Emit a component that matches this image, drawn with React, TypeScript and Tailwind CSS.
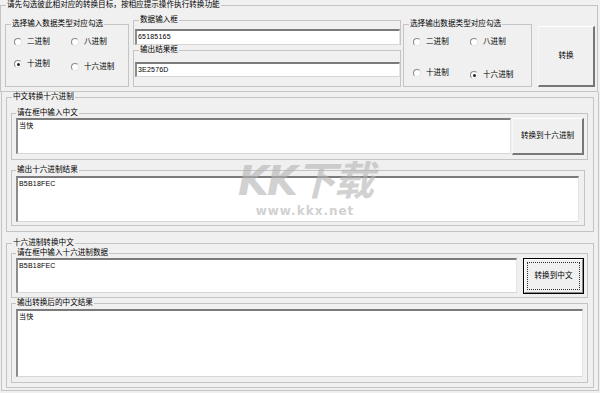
import type { ReactNode } from 'react';

const line = 'border border-[#c4c4c4]';

function Legend({ children, className = 'ml-[5px]' }: { children: ReactNode; className?: string }) {
  return <legend className={`${className} px-px leading-[10px]`}>{children}</legend>;
}

function Radio({ label, checked = false }: { label: string; checked?: boolean }) {
  return (
    <div className="flex h-[10px] w-[57px] items-center">
      <span className="flex h-[8px] w-[8px] items-center justify-center rounded-full border border-t-[#8a8a8a] border-l-[#8a8a8a] border-r-[#e6e6e6] border-b-[#e6e6e6] bg-white">
        {checked && <span className="h-[3px] w-[3px] rounded-full bg-[#222]" />}
      </span>
      <span className="ml-[5px] leading-[10px]">{label}</span>
    </div>
  );
}

function TextBox({ value, className }: { value?: string; className: string }) {
  return (
    <div
      className={`${className} border-t-2 border-l-2 border-r border-b border-t-[#7b7b7b] border-l-[#8c8c8c] border-r-[#e4e4e4] border-b-[#d6d6d6] bg-white px-[1px] pt-[1px] text-[7px] leading-[9px] tracking-[0.2px]`}
    >
      {value}
    </div>
  );
}

function Button({ label, className }: { label: string; className: string }) {
  return (
    <div
      className={`${className} flex items-center justify-center border-t border-l border-r-2 border-b-2 border-t-white border-l-[#f8f8f8] border-r-[#777] border-b-[#777] bg-[#f0f0f0]`}
    >
      {label}
    </div>
  );
}

export default function App() {
  return (
    <div className="relative h-[393px] w-[600px] overflow-hidden bg-[#f0f0f0] font-['Liberation_Sans','Noto_Sans_CJK_SC',sans-serif] text-[7.6px] text-black">
      {/* top settings row */}
      <fieldset className={`${line} h-[92px] w-[598px]`}>
        <Legend className="ml-[5px]">请先勾选彼此相对应的转换目标，按相应提示操作执行转换功能</Legend>
        <div className="flex items-start">
          <fieldset className={`${line} ml-[4px] mt-[9px] h-[68px] w-[124px]`}>
            <Legend>选择输入数据类型对应勾选</Legend>
            <div className="mt-[8px] flex pl-[8px]">
              <Radio label="二进制" />
              <Radio label="八进制" />
            </div>
            <div className="mt-[12px] flex pl-[8px]">
              <Radio label="十进制" checked />
              <div className="mt-[3px]">
                <Radio label="十六进制" />
              </div>
            </div>
          </fieldset>

          <div className="ml-[4px] mt-[5px] flex w-[268px] flex-col">
            <fieldset className={`${line} h-[30px] border-b-0 pl-px`}>
              <Legend className="ml-[4px]">数据输入框</Legend>
              <TextBox value="65185165" className="mt-[4px] h-[16px] w-[265px]" />
            </fieldset>
            <fieldset className={`${line} h-[42px] pl-px`}>
              <Legend className="ml-[4px]">输出结果框</Legend>
              <TextBox value="3E2576D" className="mt-[7px] h-[15px] w-[265px]" />
            </fieldset>
          </div>

          <fieldset className={`${line} ml-[2px] mt-[9px] h-[68px] w-[129px]`}>
            <Legend>选择输出数据类型对应勾选</Legend>
            <div className="mt-[8px] flex pl-[9px]">
              <Radio label="二进制" />
              <Radio label="八进制" />
            </div>
            <div className="mt-[21px] flex pl-[9px]">
              <Radio label="十进制" />
              <div className="mt-[2px]">
                <Radio label="十六进制" checked />
              </div>
            </div>
          </fieldset>

          <Button label="转换" className="ml-[6px] mt-[16px] h-[61px] w-[57px]" />
        </div>
      </fieldset>

      {/* conversion panels */}
      <div className={`${line} ml-px h-[299px] w-[598px] border-t-0`}>
        <fieldset className={`${line} ml-[4px] h-[140px] w-[588px]`}>
          <Legend>中文转换十六进制</Legend>
          <fieldset className={`${line} ml-[4px] mt-[6px] h-[52px] w-[577px]`}>
            <Legend className="ml-[4px]">请在框中输入中文</Legend>
            <div className="flex items-start">
              <TextBox value="当快" className="ml-[4px] h-[36px] w-[495px] text-[7.6px] leading-[10px]" />
              <Button label="转换到十六进制" className="ml-[1px] h-[37px] w-[72px]" />
            </div>
          </fieldset>
          <fieldset className={`${line} ml-[4px] mt-[5px] h-[61px] w-[574px]`}>
            <Legend className="ml-[4px]">输出十六进制结果</Legend>
            <TextBox value="B5B18FEC" className="ml-[4px] mt-[1px] h-[46px] w-[563px]" />
          </fieldset>
        </fieldset>

        <fieldset className={`${line} ml-[4px] mt-[6px] h-[150px] w-[588px]`}>
          <Legend>十六进制转换中文</Legend>
          <fieldset className={`${line} ml-[4px] h-[50px] w-[577px]`}>
            <Legend className="ml-[4px]">请在框中输入十六进制数据</Legend>
            <div className="flex items-start">
              <TextBox value="B5B18FEC" className="ml-[4px] h-[35px] w-[501px]" />
              <div className="ml-[6px] h-[36px] w-[61px] border border-black">
                <div className="flex h-full w-full items-center justify-center border-t border-l border-r border-b border-t-white border-l-white border-r-[#8a8a8a] border-b-[#8a8a8a] p-[2px]">
                  <div className="flex h-full w-full items-center justify-center border border-dotted border-[#333]">
                    转换到中文
                  </div>
                </div>
              </div>
            </div>
          </fieldset>
          <fieldset className={`${line} ml-[4px] h-[85px] w-[577px]`}>
            <Legend className="ml-[4px]">输出转换后的中文结果</Legend>
            <TextBox value="当快" className="ml-[4px] mt-[1px] h-[68px] w-[567px] text-[7.6px] leading-[10px]" />
          </fieldset>
        </fieldset>
      </div>

      {/* site watermark */}
      <div className="pointer-events-none absolute left-[238px] top-[158px] flex flex-col items-center opacity-60">
        <div className="font-['DejaVu_Sans','Noto_Sans_CJK_SC',sans-serif] text-[40px] font-bold italic leading-[46px] tracking-[-2px] text-[#b4b4b4]">
          KK下载
        </div>
        <div className="font-['DejaVu_Sans',sans-serif] text-[12px] font-bold leading-[14px] tracking-[1px] text-[#b4b4b4]">
          www.kkx.net
        </div>
      </div>
    </div>
  );
}
